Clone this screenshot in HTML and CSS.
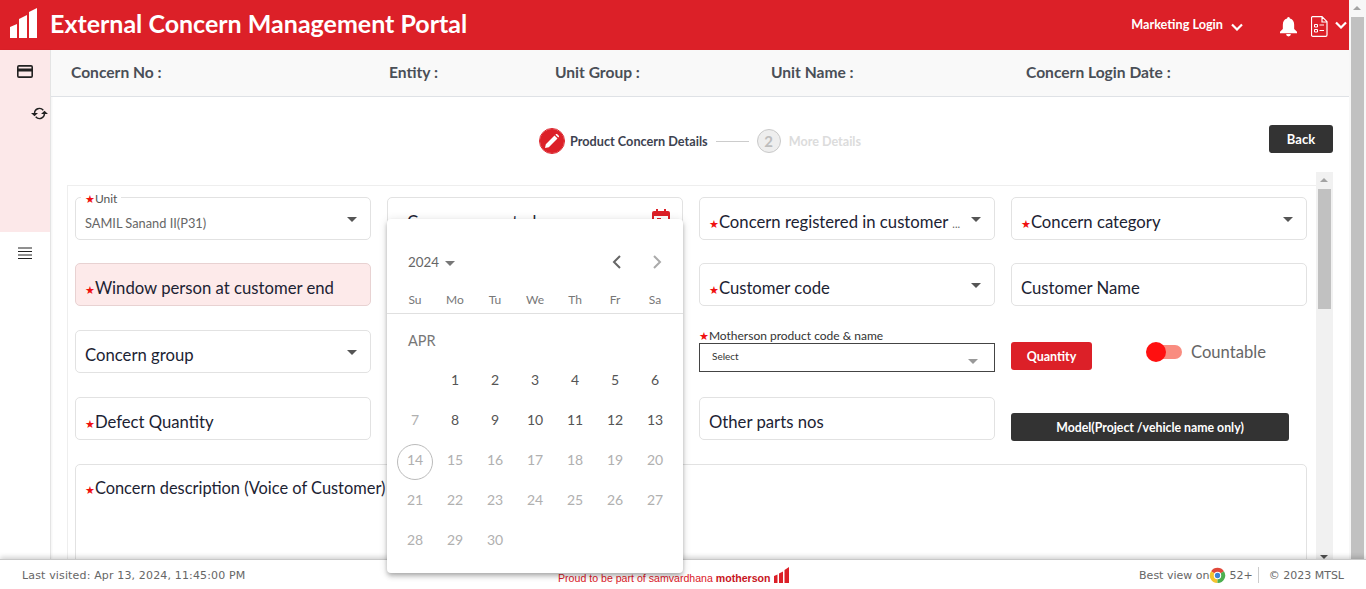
FILE: index.html
```html
<!DOCTYPE html>
<html lang="en">
<head>
  <meta charset="UTF-8" />
  <title>External Concern Management Portal</title>
  <link rel="stylesheet" href="styles.css">
</head>

<body>
  <div class="app">
    <div class="page">
      <div class="page-main">
        <header class="topbar">
          <div class="brand">
            <svg width="28" height="30" viewBox="0 0 28 30"><path fill="#fff" d="M0 19l7-3v14H0zM9 11l8-4v23H9zM19 4l8-4v30h-8z"/></svg>
          </div>
          <div class="portal-title">External Concern Management Portal</div>
          <div class="topbar-right">
            <span class="login-name">Marketing Login</span>
            <svg class="login-chevron" width="12" height="8" viewBox="0 0 12 8"><path d="M1 1.5l5 5 5-5" fill="none" stroke="#fff" stroke-width="2.2"/></svg>
            <svg class="bell" width="17" height="20" viewBox="0 0 18 21"><path fill="#fff" d="M9 0a1.5 1.5 0 0 1 1.5 1.6C13.600 2.300 15 4.800 15 8v4.500l3 3V17H0v-1.500l3-3V8c0-3.200 1.400-5.700 4.500-6.400A1.500 1.500 0 0 1 9 0zM6.500 18h5a2.500 2.500 0 0 1-5 0z"/></svg>
            <svg class="doc" width="17" height="21" viewBox="0 0 17 21"><path d="M1.500.7h9.500l5 5v13.300a1.300 1.300 0 0 1-1.300 1.300H1.800A1.300 1.300 0 0 1 .5 19V2A1.300 1.300 0 0 1 1.500.7zM11 1v5h5" fill="none" stroke="#fff" stroke-width="1.200"/><path fill="none" stroke="#fff" d="M3.500 8.500h3v2.500h-3zM3.500 13.500h3v2.500h-3z"/><path stroke="#fff" d="M8.500 9h4.500M8.500 14.500h4.500"/></svg>
            <svg class="menu-chevron" width="12" height="8" viewBox="0 0 12 8"><path d="M1 1.500l5 5 5-5" fill="none" stroke="#fff" stroke-width="2.200"/></svg>
          </div>
        </header>

        <div class="body-row">
          <aside class="sidebar">
            <div class="side-tint">
              <svg class="side-card" width="16" height="13" viewBox="0 0 16 13"><path fill="#212121" d="M2 0h12a2 2 0 0 1 2 2v9a2 2 0 0 1-2 2H2a2 2 0 0 1-2-2V2a2 2 0 0 1 2-2zm-.4 3.500h12.800V1.700H1.600zm0 3v4.800h12.800V6.500z"/></svg>
              <svg class="side-sync" width="17" height="13" viewBox="0 0 17 13"><path d="M3.500 6.500a5 5 0 0 1 8.800-3.300M13.500 6.500a5 5 0 0 1-8.800 3.300" fill="none" stroke="#212121" stroke-width="1.400"/><path fill="#212121" d="M0 6l3.500 0 0 0L7 6l-3.500 3.200zM10 7l3.500-3.200L17 7z"/></svg>
            </div>
            <svg class="side-menu" width="14" height="12" viewBox="0 0 14 12"><path stroke="#212121" stroke-width="1" d="M0 1h14M0 4.500h14M0 8h14M0 11.500h14"/></svg>
          </aside>

          <main class="workspace">
            <div class="info-bar">
              <span class="info-no">Concern No :</span>
              <span class="info-entity">Entity :</span>
              <span class="info-group">Unit Group :</span>
              <span class="info-unit">Unit Name :</span>
              <span>Concern Login Date :</span>
            </div>

            <div class="step-row">
              <div></div>
              <div class="stepper">
                <span class="step-dot">
                  <svg width="14" height="14" viewBox="0 0 14 14"><path fill="#fff" d="M0 14l.8-3.700L9.500 1.600l3 3-8.700 8.700zM10.400.7l.5-.5a1 1 0 0 1 1.400 0l1.500 1.500a1 1 0 0 1 0 1.400l-.5.500z"/></svg>
                </span>
                <span class="step-label">Product Concern Details</span>
                <span class="step-line"></span>
                <span class="step-dot step-dot-off">2</span>
                <span class="step-label step-label-off">More Details</span>
              </div>
              <div class="step-actions"><button class="btn btn-dark btn-back">Back</button></div>
            </div>

            <div class="form-wrap">
              <section class="form-panel">
                <div class="form-grid">
                  <div class="field field-float">
                    <span class="float-label"><span class="star">★</span>Unit</span>
                    <span class="field-value">SAMIL Sanand II(P31)</span>
                    <i class="caret"></i>
                  </div>
                  <div class="field">
                    <span class="field-text"><span class="star">★</span>Concern reported</span>
                    <svg class="cal-icon" width="18" height="20" viewBox="0 0 18 20"><path fill="#dc2028" d="M4 0h2v2h6V0h2v2h2a2 2 0 0 1 2 2v14a2 2 0 0 1-2 2H2a2 2 0 0 1-2-2V4a2 2 0 0 1 2-2h2zM2 7v11h14V7zm3 2h4v2H5z"/></svg>
                  </div>
                  <div class="field">
                    <span class="field-text"><span class="star">★</span>Concern registered in customer <small class="more">...</small></span>
                    <i class="caret"></i>
                  </div>
                  <div class="field">
                    <span class="field-text"><span class="star">★</span>Concern category</span>
                    <i class="caret"></i>
                  </div>

                  <div class="field field-error">
                    <span class="field-text"><span class="star">★</span>Window person at customer end</span>
                  </div>
                  <div class="field"></div>
                  <div class="field">
                    <span class="field-text"><span class="star">★</span>Customer code</span>
                    <i class="caret"></i>
                  </div>
                  <div class="field">
                    <span class="field-text">Customer Name</span>
                  </div>

                  <div class="field">
                    <span class="field-text">Concern group</span>
                    <i class="caret"></i>
                  </div>
                  <div class="field"></div>
                  <div class="product-cell">
                    <span class="product-label"><span class="star">★</span>Motherson product code &amp; name</span>
                    <div class="product-select">
                      <span>Select</span>
                      <i class="caret caret-soft"></i>
                    </div>
                  </div>
                  <div class="qty-cell">
                    <button class="btn btn-red btn-qty">Quantity</button>
                    <span class="toggle"><i class="toggle-knob"></i></span>
                    <span class="toggle-label">Countable</span>
                  </div>

                  <div class="field">
                    <span class="field-text"><span class="star">★</span>Defect Quantity</span>
                  </div>
                  <div class="field"></div>
                  <div class="field">
                    <span class="field-text">Other parts nos</span>
                  </div>
                  <div class="model-cell">
                    <button class="btn btn-dark btn-model">Model(Project /vehicle name only)</button>
                  </div>

                  <div class="field field-area">
                    <span class="field-text"><span class="star">★</span>Concern description (Voice of Customer)</span>
                  </div>
                </div>
              </section>
              <div class="scrollbar scrollbar-inner">
                <i class="arrow-up"></i>
                <i class="thumb thumb-inner"></i>
                <i class="arrow-down"></i>
              </div>
            </div>
          </main>
        </div>
      </div>

      <div class="scrollbar scrollbar-page">
        <i class="arrow-up"></i>
        <i class="thumb thumb-page"></i>
      </div>
    </div>

    <footer class="footer">
      <span class="visited">Last visited: Apr 13, 2024, 11:45:00 PM</span>
      <span class="proud">
        <span>Proud to be part of samvardhana <b>motherson</b></span>
        <svg width="15" height="16" viewBox="0 0 15 16"><path fill="#dc2028" d="M0 9l3.500-1.500V16H0zM5 6.500l4-2V16H5zM10.500 3L15 0v16h-4.500z"/></svg>
      </span>
      <span class="footer-right">
        <span>Best view on</span>
        <svg class="chrome" width="17" height="17" viewBox="0 0 32 32">
          <path d="M16 16L4 8A14 14 0 0 1 28 8z" fill="#e0483a"/>
          <path d="M16 16L4 8A14 14 0 0 0 16 30z" fill="#f4c430"/>
          <path d="M16 16L16 30A14 14 0 0 0 28 8z" fill="#4caf50"/>
          <circle cx="16" cy="16" r="7" fill="#fff"/>
          <circle cx="16" cy="16" r="5" fill="#3b82d6"/>
        </svg>
        <span>52+</span>
        <span class="footer-sep"></span>
        <span>© 2023 MTSL</span>
      </span>
    </footer>

    <div class="calendar">
      <div class="cal-head">
        <span class="cal-year">2024 <i class="caret caret-year"></i></span>
        <span class="cal-nav">
          <svg width="10" height="14" viewBox="0 0 10 14"><path d="M8 1L2 7l6 6" fill="none" stroke="#666" stroke-width="2"/></svg>
          <svg width="10" height="14" viewBox="0 0 10 14"><path d="M2 1l6 6-6 6" fill="none" stroke="#aaa" stroke-width="2"/></svg>
        </span>
      </div>
      <div class="cal-days">
        <span>Su</span><span>Mo</span><span>Tu</span><span>We</span><span>Th</span><span>Fr</span><span>Sa</span>
      </div>
      <div class="cal-month">APR</div>
      <div class="cal-grid">
        <span></span><span>1</span><span>2</span><span>3</span><span>4</span><span>5</span><span>6</span>
        <span class="off">7</span><span>8</span><span>9</span><span>10</span><span>11</span><span>12</span><span>13</span>
        <span class="off today"><em>14</em></span><span class="off">15</span><span class="off">16</span><span class="off">17</span><span class="off">18</span><span class="off">19</span><span class="off">20</span>
        <span class="off">21</span><span class="off">22</span><span class="off">23</span><span class="off">24</span><span class="off">25</span><span class="off">26</span><span class="off">27</span>
        <span class="off">28</span><span class="off">29</span><span class="off">30</span>
      </div>
    </div>
  </div>
</body>
</html>
```

FILE: styles.css
```css
* {
  box-sizing: border-box;
}

html, body {
  margin: 0;
  height: 100%;
  overflow: hidden;
}

body {
  background: #fff;
  color: #1c2333;
  font-family: "Lato", "Noto Sans", sans-serif;
}

i {
  display: block;
}

.app {
  position: relative;
  display: flex;
  flex-direction: column;
  height: 100vh;
}

.page {
  flex: 1;
  min-height: 0;
  display: flex;
}

.page-main {
  flex: 1;
  min-width: 0;
  display: flex;
  flex-direction: column;
}

/* top red bar */
.topbar {
  height: 50px;
  flex: none;
  background: #dc2028;
  color: #fff;
  display: flex;
  align-items: center;
}

.brand {
  width: 50px;
  height: 50px;
  padding: 8px 0 0 10px;
  flex: none;
}

.portal-title {
  font-size: 25px;
  font-weight: 700;
  margin-top: -5px;
}

.topbar-right {
  margin-left: auto;
  display: flex;
  align-items: center;
}

.login-name {
  font-size: 12.7px;
  font-weight: 700;
  margin-top: -2px;
}

.login-chevron {
  margin: 4px 0 0 8px;
}

.bell {
  margin: 4px 0 0 37px;
}

.doc {
  margin: 2px 0 0 14px;
}

.menu-chevron {
  margin: 0 2px 0 7px;
}

.body-row {
  flex: 1;
  min-height: 0;
  display: flex;
}

/* sidebar */
.sidebar {
  width: 51px;
  flex: none;
  border-right: 1px solid #e4e4e4;
  box-shadow: 1px 0 2px rgba(0, 0, 0, 0.05);
}

.side-tint {
  height: 182px;
  background: #fce8e9;
  padding-top: 15px;
}

.side-card {
  display: block;
  margin-left: 17px;
}

.side-sync {
  display: block;
  margin: 29px 0 0 31px;
}

.side-menu {
  display: block;
  margin: 15px 0 0 18px;
}

.workspace {
  flex: 1;
  min-width: 0;
  display: flex;
  flex-direction: column;
}

.info-bar {
  height: 47px;
  flex: none;
  background: #f9f9f9;
  border-bottom: 1px solid #dfe2e6;
  padding: 0 0 3px 20px;
  display: flex;
  align-items: center;
  color: #4a4f57;
  font-size: 15.6px;
  font-weight: 700;
}

.info-no { width: 318px; }
.info-entity { width: 166px; }
.info-group { width: 216px; }
.info-unit { width: 255px; }

.step-row {
  height: 75px;
  flex: none;
  display: grid;
  grid-template-columns: 1fr auto 1fr;
  align-items: center;
}

.stepper {
  display: flex;
  align-items: center;
  margin-top: 13px;
}

.step-dot {
  width: 24px;
  height: 24px;
  border-radius: 50%;
  background: #dc2028;
  display: flex;
  align-items: center;
  justify-content: center;
  outline: 1px solid #dc2028;
  margin: 0 1px;
}

.step-dot-off {
  background: #eee;
  outline: none;
  border: 1px solid #c9c9c9;
  color: #bdbdbd;
  font-size: 15px;
  font-weight: 700;
  margin: 0;
}

.step-label {
  margin-left: 5px;
  font-size: 12.7px;
  font-weight: 700;
  color: #3d4250;
}

.step-label-off {
  margin-left: 8px;
  font-size: 12.6px;
  color: #dcdcdc;
}

.step-line {
  width: 33px;
  height: 1px;
  background: #ccc;
  margin: 0 8px;
}

.step-actions {
  display: flex;
  justify-content: flex-end;
  padding: 8px 16px 0 0;
}

.btn {
  border: 0;
  border-radius: 3px;
  color: #fff;
  font-family: inherit;
  font-weight: 700;
  padding: 0;
}

.btn-dark {
  background: #333;
}

.btn-red {
  background: #dc2028;
}

.btn-back {
  width: 64px;
  height: 28px;
  font-size: 13px;
}

/* form */
.form-wrap {
  flex: 1;
  min-height: 0;
  display: flex;
  padding-left: 16px;
  padding-right: 16px;
}

.form-panel {
  flex: 1;
  min-width: 0;
  margin-top: 13px;
  padding: 10.6px 8px 0 7px;
  border-top: 1px solid #eee;
  border-left: 1px solid #eee;
  overflow: hidden;
}

.form-grid {
  display: grid;
  grid-template-columns: repeat(4, 296px);
  grid-auto-rows: 43px;
  column-gap: 16px;
  row-gap: 23.75px;
}

.field {
  position: relative;
  background: #fff;
  border: 1px solid #e2e2e2;
  border-radius: 5px;
  padding: 0 9px;
  display: flex;
  align-items: flex-end;
}

.field-error {
  background: #fdeaea;
  border-color: #e8d2d2;
}

.field-text {
  font-size: 16.7px;
  line-height: 20px;
  padding-bottom: 7px;
  white-space: nowrap;
}

.more {
  font-size: 11px;
  line-height: 0;
  color: #666;
}

.star {
  color: #f01010;
  font-size: 11px;
  line-height: 0;
  font-family: "DejaVu Sans", sans-serif;
}

.cal-icon {
  position: absolute;
  right: 12px;
  top: 11px;
}

.caret {
  position: absolute;
  right: 13px;
  top: 19px;
  width: 0;
  height: 0;
  border-left: 5px solid transparent;
  border-right: 5px solid transparent;
  border-top: 5px solid #555;
}

.field-float .field-value {
  font-size: 12.8px;
  color: #666;
  padding-bottom: 8px;
}

.float-label {
  position: absolute;
  left: 5px;
  top: -7px;
  background: #fff;
  padding: 0 4px;
  font-size: 12px;
  line-height: 15px;
  color: #555;
}

.field-area {
  grid-column: 1 / -1;
  height: 140px;
  align-items: flex-start;
  padding-top: 13px;
}

.field-area .field-text {
  font-size: 16.4px;
}

.product-cell {
  position: relative;
  display: flex;
  flex-direction: column;
  margin-top: -1px;
}

.product-label {
  font-size: 12px;
  line-height: 14px;
  color: #333;
}

.product-select {
  position: relative;
  height: 29px;
  border: 1px solid #444;
  padding: 6px 12px;
  font-size: 10px;
  color: #333;
}

.caret-soft {
  right: 16px;
  top: 15px;
  border-top-color: #999;
}

.qty-cell {
  position: relative;
  display: flex;
  align-items: flex-start;
}

.btn-qty {
  width: 81px;
  height: 28px;
  margin-top: 12px;
  font-size: 12.5px;
}

.toggle {
  position: relative;
  width: 26px;
  height: 14px;
  margin: 15px 0 0 64px;
  background: #f98c80;
  border-radius: 7px;
}

.toggle-knob {
  position: absolute;
  left: -10px;
  top: -3px;
  width: 20px;
  height: 20px;
  border-radius: 50%;
  background: #ff1010;
}

.toggle-label {
  margin: 12px 0 0 9px;
  font-size: 16.6px;
  line-height: 20px;
  color: #666;
}

.model-cell {
  padding-top: 16px;
}

.btn-model {
  display: block;
  width: 278px;
  height: 28px;
  padding-top: 1px;
  font-size: 12.3px;
}

/* drawn scrollbars */
.scrollbar {
  position: relative;
  width: 17px;
  flex: none;
  background: #f1f1f1;
}

.scrollbar-page {
  background: #f7f7f7;
}

.thumb {
  position: absolute;
  left: 2px;
  right: 2px;
  background: #c1c1c1;
}

.thumb-page {
  top: 17px;
  bottom: 0;
}

.thumb-inner {
  top: 17px;
  height: 120px;
}

.arrow-up,
.arrow-down {
  position: absolute;
  left: 4px;
  width: 0;
  height: 0;
  border-left: 4px solid transparent;
  border-right: 4px solid transparent;
}

.arrow-up {
  top: 6px;
  border-bottom: 4px solid #a3a3a3;
}

.arrow-down {
  bottom: 0;
  border-top: 4px solid #505050;
}

/* footer */
.footer {
  position: relative;
  height: 30px;
  flex: none;
  background: #fff;
  border-top: 1px solid #c8c8c8;
  box-shadow: 0 -2px 5px rgba(0, 0, 0, 0.18);
  padding: 1px 22px 0;
  display: grid;
  grid-template-columns: 536px auto 1fr;
  align-items: center;
  color: #666;
  font-family: "DejaVu Sans", sans-serif;
  font-size: 11px;
}

.visited {
  letter-spacing: 0.15px;
}

.proud {
  display: flex;
  align-items: flex-end;
  gap: 3px;
  color: #dc2028;
  font-family: "Liberation Sans", sans-serif;
  font-size: 10.6px;
  margin-top: -1px;
}

.proud span {
  margin-bottom: -1px;
}

.proud b {
  color: #c8161e;
}

.footer-right {
  display: flex;
  align-items: center;
  justify-content: flex-end;
}

.chrome {
  margin: 0 3px 0 0;
}

.footer-sep {
  width: 1px;
  height: 16px;
  background: #ccc;
  margin: 0 10px 0 5px;
}

/* datepicker popup, sits over the form and footer */
.calendar {
  position: absolute;
  left: 387px;
  top: 219px;
  width: 296px;
  height: 354px;
  background: #fff;
  border-radius: 4px;
  box-shadow: 0 2px 4px -1px rgba(0, 0, 0, 0.2), 0 4px 5px rgba(0, 0, 0, 0.14), 0 1px 10px rgba(0, 0, 0, 0.12);
  color: #666;
}

.cal-head {
  height: 62px;
  padding: 24px 21px 0 21px;
  display: flex;
  justify-content: space-between;
  align-items: center;
}

.cal-year {
  position: relative;
  font-size: 13.4px;
  padding-right: 16px;
}

.caret-year {
  right: 0;
  top: 7px;
  border-top-color: #777;
}

.cal-nav {
  display: flex;
  gap: 30px;
}

.cal-days {
  display: grid;
  grid-template-columns: repeat(7, 40px);
  height: 33px;
  padding: 4px 8px 0;
  border-bottom: 1px solid #e0e0e0;
  width: 100%;
  align-items: center;
  font-size: 12px;
  text-align: center;
  color: #777;
}

.cal-month {
  padding: 18px 0 0 21px;
  height: 46px;
  font-size: 14.5px;
  color: #777;
}

.cal-grid {
  display: grid;
  grid-template-columns: repeat(7, 40px);
  grid-auto-rows: 40px;
  padding: 0 8px;
  font-size: 14px;
  text-align: center;
  line-height: 40px;
  color: #555;
}

.cal-grid .off {
  color: #b0b0b0;
}

.today {
  display: flex;
  align-items: center;
  justify-content: center;
}

.today em {
  width: 36px;
  height: 36px;
  margin-top: 4px;
  border: 1px solid #bbb;
  border-radius: 50%;
  font-style: normal;
  line-height: 30px;
}
```
